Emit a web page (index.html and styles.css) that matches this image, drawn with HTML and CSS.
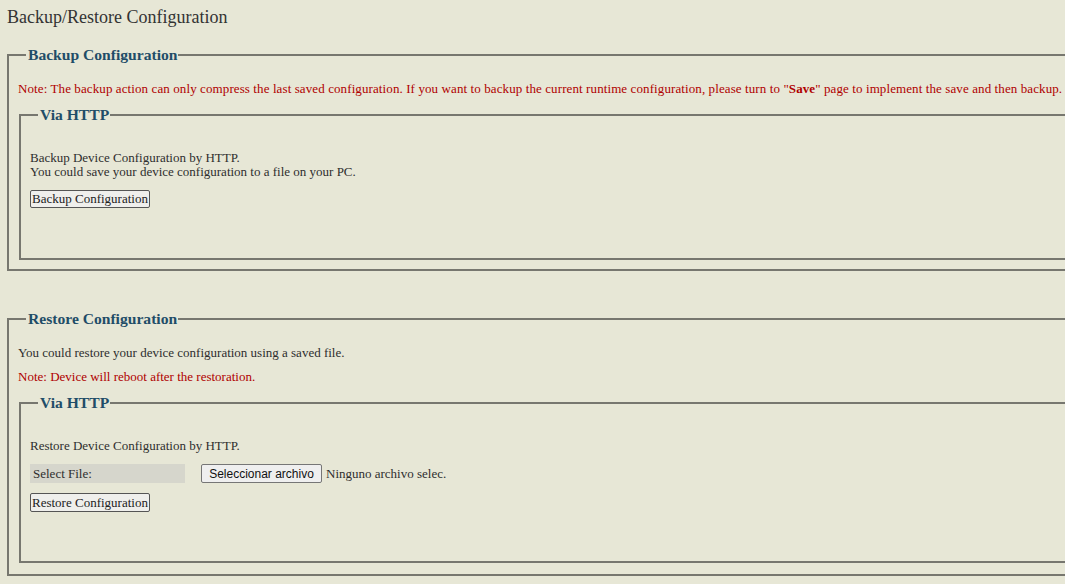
FILE: index.html
```html
<!DOCTYPE html>
<html>
<head>
<meta charset="utf-8">
<title>Backup/Restore Configuration</title>
<link rel="stylesheet" href="styles.css">
</head>
<body>
<div class="page">
  <h1 class="title">Backup/Restore Configuration</h1>

  <fieldset class="box box-backup">
    <legend class="legend">Backup Configuration</legend>
    <p class="note note-first">Note: The backup action can only compress the last saved configuration. If you want to backup the current runtime configuration, please turn to "<b>Save</b>" page to implement the save and then backup.</p>
    <fieldset class="sub sub-backup">
      <legend class="legend">Via HTTP</legend>
      <p class="text text-first">Backup Device Configuration by HTTP.<br>You could save your device configuration to a file on your PC.</p>
      <button class="btn btn-gap" type="button">Backup Configuration</button>
    </fieldset>
  </fieldset>

  <fieldset class="box box-restore">
    <legend class="legend">Restore Configuration</legend>
    <p class="text text-lead">You could restore your device configuration using a saved file.</p>
    <p class="note note-second">Note: Device will reboot after the restoration.</p>
    <fieldset class="sub sub-restore">
      <legend class="legend">Via HTTP</legend>
      <p class="text text-first">Restore Device Configuration by HTTP.</p>
      <div class="file-row">
        <span class="file-label">Select File:</span>
        <button class="file-btn" type="button">Seleccionar archivo</button>
        <span class="file-name">Ninguno archivo selec.</span>
      </div>
      <button class="btn btn-gap2" type="button">Restore Configuration</button>
    </fieldset>
  </fieldset>
</div>
</body>
</html>
```
FILE: styles.css
```css
html, body {
  margin: 0;
  padding: 0;
  background: #e7e7d6;
  overflow: hidden;
}
body {
  font-family: "Liberation Serif", "Times New Roman", serif;
  font-size: 13px;
  color: #2e2e2e;
}
.page {
  padding: 0 0 0 7px;
  width: 1100px;
}
.title {
  margin: 0;
  padding-top: 7px;
  font-size: 18px;
  line-height: 20px;
  font-weight: normal;
  color: #333;
}
.box, .sub {
  margin: 0;
  padding: 0 0 0 9px;
  border: 2px solid #77776f;
  min-width: 0;
}
.box {
  width: 1100px;
  box-sizing: border-box;
}
.sub {
  margin-left: 1px;
  width: 1090px;
  box-sizing: border-box;
}
.legend {
  margin-left: 8px;
  padding: 0 1px 0 2px;
  font-size: 15.6px;
  line-height: 16px;
  font-weight: bold;
  color: #1f4d68;
}
.box-backup { margin-top: 20px; }
.box-restore { margin-top: 40px; }
.note, .text {
  margin: 0;
  line-height: 14px;
}
.note { color: #b00000; white-space: nowrap; }
.note b { font-weight: bold; }
.note-first { margin-top: 19px; letter-spacing: 0.1px; }
.text-lead { margin-top: 19px; }
.note-second { margin-top: 10px; }
.sub-backup { margin-top: 11px; margin-bottom: 9px; padding-bottom: 50px; }
.sub-restore { margin-top: 11px; margin-bottom: 11px; padding-bottom: 49px; }
.text-first { margin-top: 28px; }
.btn {
  display: block;
  font-family: "Liberation Serif", "Times New Roman", serif;
  font-size: 13px;
  color: #222;
  background: #efefec;
  border: 1px solid #555;
  border-radius: 2px;
  padding: 0 1px;
  height: 18px;
  line-height: 16px;
}
.btn-gap { margin-top: 11px; }
.btn-gap2 { margin-top: 10px; height: 19px; }
.file-row {
  margin-top: 11px;
  display: flex;
  align-items: center;
  height: 19px;
}
.file-label {
  width: 152px;
  height: 19px;
  line-height: 19px;
  padding-left: 3px;
  background: #d6d6cc;
}
.file-btn {
  margin-left: 16px;
  width: 121px;
  height: 19px;
  padding: 0;
  font-family: "Liberation Sans", Arial, sans-serif;
  font-size: 12px;
  color: #111;
  background: #efefef;
  border: 1px solid #767676;
  border-radius: 2px;
}
.file-name {
  margin-left: 4px;
  line-height: 19px;
}
```
